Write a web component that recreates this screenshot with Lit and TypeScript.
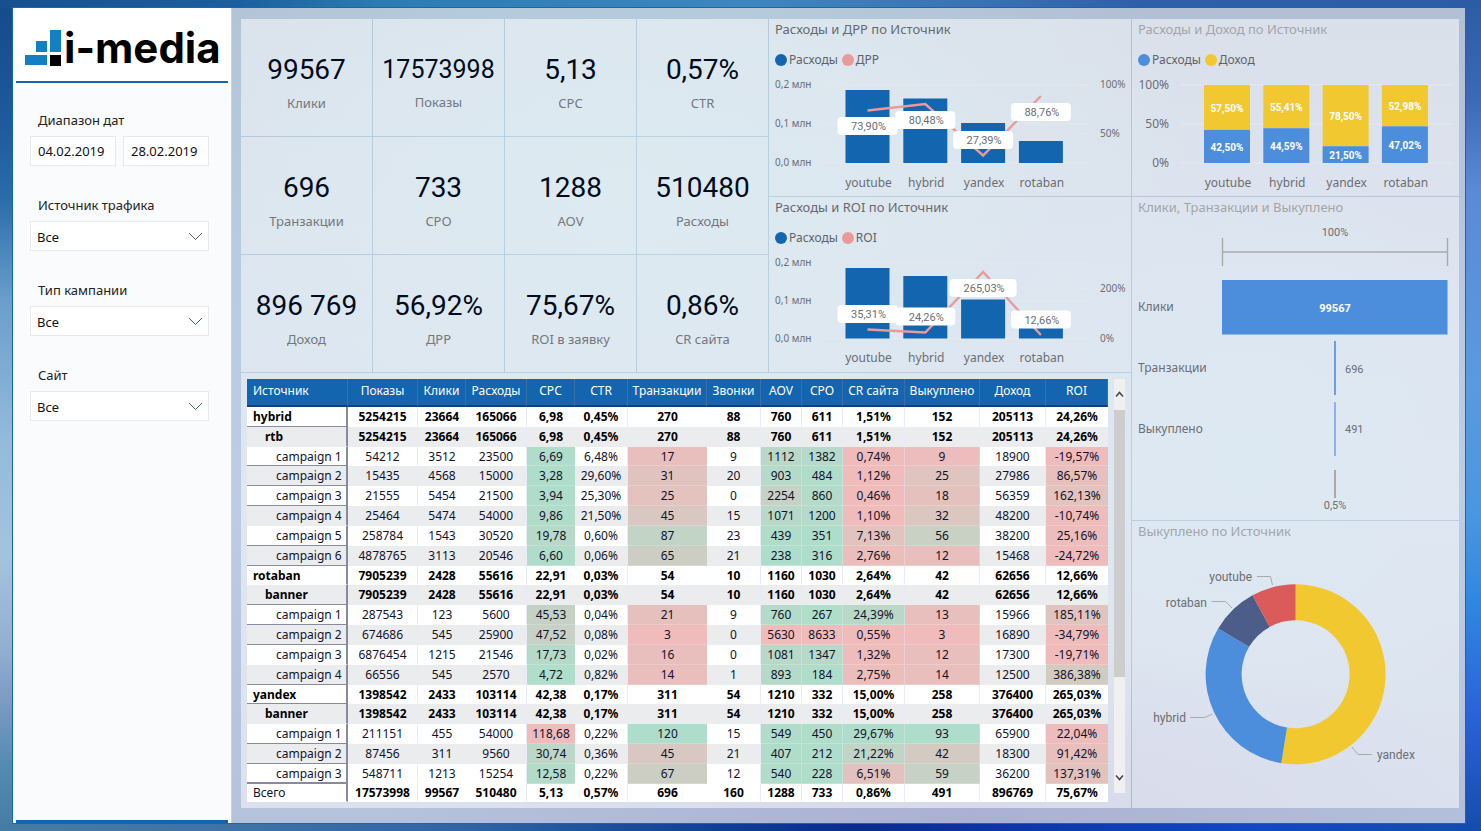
import { LitElement, html, css, svg, nothing } from "lit";
import { customElement, property } from "lit/decorators.js";
import { classMap } from "lit/directives/class-map.js";
import { styleMap } from "lit/directives/style-map.js";

const BLUE = "#1465b0";
const PINK = "#e99a9a";
const SKY = "#4d8edc";
const YELLOW = "#f2c831";

const chartText = css`
  :host {
    display: block;
  }
  svg {
    display: block;
    width: 100%;
    height: auto;
    overflow: visible;
  }
  text {
    font-family: "Noto Sans", "Open Sans", sans-serif;
    font-size: 12px;
    fill: #6b6e73;
    dominant-baseline: central;
  }
  .tiny {
    font-size: 10px;
  }
  .num {
    font-family: Roboto, sans-serif;
    font-size: 11px;
  }
  .mid {
    text-anchor: middle;
  }
  .end {
    text-anchor: end;
  }
  .inv {
    fill: #fff;
    font-weight: 700;
  }
  .small {
    font-size: 10px;
  }
  .grid {
    stroke: #e6e8ec;
    stroke-width: 1;
  }
`;

/* ---------- KPI tile ---------- */

@customElement("kpi-tile")
class KpiTile extends LitElement {
  @property() value = "";
  @property() label = "";

  static styles = css`
    :host {
      display: flex;
      flex-direction: column;
      align-items: center;
      justify-content: center;
      height: 117px;
      background: rgba(255, 255, 255, 0.52);
    }
    .value {
      font: 400 28px/36px Roboto, sans-serif;
      color: #030c1c;
      margin-top: 8px;
      white-space: nowrap;
    }
    .long {
      font-size: 25px;
      line-height: 34px;
    }
    .label {
      font-size: 13px;
      line-height: 18px;
      margin-top: 6px;
      color: #74777c;
    }
  `;

  render() {
    return html`
      <div class=${classMap({ value: true, long: this.value.length > 7 })}>${this.value}</div>
      <div class="label">${this.label}</div>
    `;
  }
}

/* ---------- Panel with title and legend ---------- */

@customElement("chart-card")
class ChartCard extends LitElement {
  @property() heading = "";
  @property({ attribute: false }) legend: { name: string; color: string }[] = [];
  @property({ type: Boolean }) muted = false;

  static styles = css`
    :host {
      display: block;
      background: rgba(255, 255, 255, 0.52);
    }
    .title {
      margin: 0;
      padding: 0 0 2px 6px;
      font-size: 13px;
      font-weight: 400;
      line-height: 20px;
      color: #666a70;
    }
    .muted {
      color: #a3a5a9;
    }
    .legend {
      display: flex;
      gap: 4px;
      margin: 0;
      padding: 11px 6px 0;
      list-style: none;
      font-size: 12px;
      line-height: 16px;
      color: #5f6368;
    }
    .entry {
      display: flex;
      align-items: center;
      gap: 2px;
    }
    .dot {
      width: 12px;
      height: 12px;
      border-radius: 50%;
    }
  `;

  render() {
    return html`
      <h2 class=${classMap({ title: true, muted: this.muted })}>${this.heading}</h2>
      ${this.legend.length
        ? html`<ul class="legend">
            ${this.legend.map(
              (l) => html`<li class="entry">
                <span class="dot" style=${styleMap({ background: l.color })}></span>${l.name}
              </li>`
            )}
          </ul>`
        : nothing}
      <slot></slot>
    `;
  }
}

/* ---------- Bars with a line on a second axis ---------- */

interface ComboPoint {
  name: string;
  top: number;
  y: number;
  tag: string;
  tagY: number;
}

@customElement("combo-chart")
class ComboChart extends LitElement {
  @property({ attribute: false }) points: ComboPoint[] = [];
  @property({ attribute: false }) left: [string, number][] = [];
  @property({ attribute: false }) right: [string, number][] = [];
  @property({ type: Number }) height = 128;

  static styles = chartText;

  render() {
    const base = this.left[this.left.length - 1]?.[1] ?? 0;
    const cx = (i: number) => 98.5 + i * 57.8;
    return html`<svg viewBox="0 0 362 ${this.height}">
      ${this.left.map(
        ([t, y]) => svg`
          <line class="grid" x1="53" x2="319" y1=${y} y2=${y}></line>
          <text class="tiny" x="6" y=${y - 1}>${t}</text>`
      )}
      ${this.right.map(
        ([t, y]) => svg`
          <line class="grid" x1="312" x2="319" y1=${y} y2=${y}></line>
          <text class="tiny" x="331" y=${y - 1}>${t}</text>`
      )}
      ${this.points.map(
        (p, i) => svg`
          <rect x=${cx(i) - 22} y=${p.top} width="44" height=${base - p.top} fill=${BLUE}></rect>
          <text class="mid" x=${cx(i) + 1} y=${base + 19}>${p.name}</text>`
      )}
      <polyline
        points=${this.points.map((p, i) => `${cx(i)},${p.y}`).join(" ")}
        fill="none"
        stroke=${PINK}
        stroke-width="2.4"
      ></polyline>
      ${this.points.map((p, i) => {
        const w = p.tag.length > 6 ? 67 : 60;
        return svg`
          <rect x=${cx(i) - w / 2} y=${p.tagY} width=${w} height="18" rx="4" fill="#fff"></rect>
          <text class="num mid" x=${cx(i) + 1} y=${p.tagY + 9.5}>${p.tag}</text>`;
      })}
    </svg>`;
  }
}

/* ---------- 100% stacked columns ---------- */

@customElement("stacked-chart")
class StackedChart extends LitElement {
  @property({ attribute: false }) rows: [string, number][] = [];

  static styles = chartText;

  render() {
    const pct = (n: number) => n.toFixed(2).replace(".", ",") + "%";
    return html`<svg viewBox="0 0 327 128">
      ${([["100%", 17], ["50%", 56], ["0%", 95]] as [string, number][]).map(
        ([t, y]) => svg`
          <line class="grid" x1="49" x2="321" y1=${y} y2=${y}></line>
          <text class="end" x="37" y=${y - 1}>${t}</text>`
      )}
      ${this.rows.map(([name, cost], i) => {
        const x = 72 + i * 59.3;
        const split = 95 - (78 * cost) / 100;
        return svg`
          <rect x=${x} y="17" width="46" height=${split - 17} fill=${YELLOW}></rect>
          <rect x=${x} y=${split} width="46" height=${95 - split} fill=${SKY}></rect>
          <text class="num small inv mid" x=${x + 23} y=${(17 + split) / 2 + 1}>${pct(100 - cost)}</text>
          <text class="num small inv mid" x=${x + 23} y=${(95 + split) / 2 + 1}>${pct(cost)}</text>
          <text class="mid" x=${x + 24} y="114">${name}</text>`;
      })}
    </svg>`;
  }
}

/* ---------- Funnel ---------- */

@customElement("funnel-chart")
class FunnelChart extends LitElement {
  static styles = chartText;

  render() {
    return html`<svg viewBox="0 0 327 301">
      <text class="num mid" x="203" y="13.5">100%</text>
      <path d="M90.5 19V47M315.5 19V47M90.5 33H315.5" fill="none" stroke="#a8aaad" stroke-width="1.4"></path>
      <rect x="90" y="61" width="225.5" height="54.5" fill=${SKY}></rect>
      <text class="num inv mid" x="203" y="89.5">99567</text>
      <text x="6" y="87">Клики</text>
      <text x="6" y="148">Транзакции</text>
      <text x="6" y="209">Выкуплено</text>
      <rect x="202" y="122" width="2" height="54" fill="#6a9fe1"></rect>
      <rect x="202" y="183" width="2" height="54" fill="#8db3e7"></rect>
      <rect x="202" y="251" width="2" height="28" fill="#a8aaad"></rect>
      <text class="num" x="213" y="150.5">696</text>
      <text class="num" x="213" y="210.5">491</text>
      <text class="num mid" x="203" y="286.5">0,5%</text>
    </svg>`;
  }
}

/* ---------- Donut ---------- */

@customElement("donut-chart")
class DonutChart extends LitElement {
  @property({ attribute: false }) slices: [number, string][] = [];

  static styles = [
    chartText,
    css`
      .leader {
        fill: none;
        stroke: #a8aaad;
      }
      .name {
        font-family: Roboto, sans-serif;
      }
    `,
  ];

  private arc(from: number, to: number) {
    const [cx, cy, R, r] = [163.6, 131.3, 90, 54];
    const at = (rad: number, t: number) => {
      const a = t * 2 * Math.PI;
      return `${(cx + rad * Math.sin(a)).toFixed(2)} ${(cy - rad * Math.cos(a)).toFixed(2)}`;
    };
    const big = to - from > 0.5 ? 1 : 0;
    return `M${at(R, from)}A${R} ${R} 0 ${big} 1 ${at(R, to)}L${at(r, to)}A${r} ${r} 0 ${big} 0 ${at(r, from)}Z`;
  }

  render() {
    const total = this.slices.reduce((s, [n]) => s + n, 0);
    let acc = 0;
    return html`<svg viewBox="0 0 327 265">
      ${this.slices.map(([n, color]) => {
        const from = acc / total;
        acc += n;
        return svg`<path d=${this.arc(from, acc / total)} fill=${color}></path>`;
      })}
      <polyline class="leader" points="125,33.5 138.5,33.5 140.5,42"></polyline>
      <polyline class="leader" points="79.5,58.5 93.5,58.5 100,65"></polyline>
      <polyline class="leader" points="58,174.5 72.5,174.5 80.5,171"></polyline>
      <polyline class="leader" points="220,204 226,211.5 240,211.5"></polyline>
      <text class="name end" x="120" y="34">youtube</text>
      <text class="name end" x="75" y="60">rotaban</text>
      <text class="name end" x="54" y="175">hybrid</text>
      <text class="name" x="245" y="212">yandex</text>
    </svg>`;
  }
}

/* ---------- Table ---------- */

const HEAD = ["Источник", "Показы", "Клики", "Расходы", "CPC", "CTR", "Транзакции", "Звонки", "AOV", "CPO", "CR сайта", "Выкуплено", "Доход", "ROI"];
const WIDTHS = [101, 70, 48, 61, 48, 53, 79, 54, 41, 41, 62, 75, 66, 62];

const ROWS: [number, string][] = [
  [0, "hybrid|5254215|23664|165066|6,98|0,45%|270|88|760|611|1,51%|152|205113|24,26%"],
  [1, "rtb|5254215|23664|165066|6,98|0,45%|270|88|760|611|1,51%|152|205113|24,26%"],
  [2, "campaign 1|54212|3512|23500|6,69|6,48%|17|9|1112|1382|0,74%|9|18900|-19,57%"],
  [2, "campaign 2|15435|4568|15000|3,28|29,60%|31|20|903|484|1,12%|25|27986|86,57%"],
  [2, "campaign 3|21555|5454|21500|3,94|25,30%|25|0|2254|860|0,46%|18|56359|162,13%"],
  [2, "campaign 4|25464|5474|54000|9,86|21,50%|45|15|1071|1200|1,10%|32|48200|-10,74%"],
  [2, "campaign 5|258784|1543|30520|19,78|0,60%|87|23|439|351|7,13%|56|38200|25,16%"],
  [2, "campaign 6|4878765|3113|20546|6,60|0,06%|65|21|238|316|2,76%|12|15468|-24,72%"],
  [0, "rotaban|7905239|2428|55616|22,91|0,03%|54|10|1160|1030|2,64%|42|62656|12,66%"],
  [1, "banner|7905239|2428|55616|22,91|0,03%|54|10|1160|1030|2,64%|42|62656|12,66%"],
  [2, "campaign 1|287543|123|5600|45,53|0,04%|21|9|760|267|24,39%|13|15966|185,11%"],
  [2, "campaign 2|674686|545|25900|47,52|0,08%|3|0|5630|8633|0,55%|3|16890|-34,79%"],
  [2, "campaign 3|6876454|1215|21546|17,73|0,02%|16|0|1081|1347|1,32%|12|17300|-19,71%"],
  [2, "campaign 4|66556|545|2570|4,72|0,82%|14|1|893|184|2,75%|14|12500|386,38%"],
  [0, "yandex|1398542|2433|103114|42,38|0,17%|311|54|1210|332|15,00%|258|376400|265,03%"],
  [1, "banner|1398542|2433|103114|42,38|0,17%|311|54|1210|332|15,00%|258|376400|265,03%"],
  [2, "campaign 1|211151|455|54000|118,68|0,22%|120|15|549|450|29,67%|93|65900|22,04%"],
  [2, "campaign 2|87456|311|9560|30,74|0,36%|45|21|407|212|21,22%|42|18300|91,42%"],
  [2, "campaign 3|548711|1213|15254|12,58|0,22%|67|12|540|228|6,51%|59|36200|137,31%"],
];
const TOTAL = "Всего|17573998|99567|510480|5,13|0,57%|696|160|1288|733|0,86%|491|896769|75,67%".split("|");
const UNRULED = new Set([1, 5, 8, 12, 15]);
const RULED_COLUMNS = new Set([1, 3, 5, 7, 8, 9, 10, 11, 12]);

/* column -> value shown green, value shown red */
const SCALE: Record<number, [number, number]> = {
  4: [3.28, 118.68],
  6: [120, 3],
  8: [238, 5630],
  9: [184, 8633],
  10: [29.67, 0.46],
  11: [93, 3],
  13: [870, -34.79],
};

function heat(col: number, text: string): string {
  const [good, bad] = SCALE[col];
  const v = parseFloat(text.replace(",", "."));
  const t = Math.min(1, Math.max(0, (v - good) / (bad - good)));
  const mix = (a: number, b: number) => Math.round(a + (b - a) * t);
  return `rgb(${mix(174, 240)}, ${mix(222, 187)}, ${mix(203, 187)})`;
}

@customElement("source-table")
class SourceTable extends LitElement {
  static styles = css`
    :host {
      display: flex;
      gap: 6px;
      padding: 6px;
      background: rgba(255, 255, 255, 0.52);
    }
    .data {
      flex: 1;
      height: 423px;
      table-layout: fixed;
      border-collapse: separate;
      border-spacing: 0;
      background: #fff;
      font-size: 12px;
      line-height: 16px;
      color: #12122a;
    }
    th,
    td {
      padding: 1px 0 0;
      text-align: center;
      white-space: nowrap;
      font-weight: 400;
      border-bottom: 1px solid transparent;
    }
    .head {
      height: 28px;
      box-sizing: border-box;
      padding-bottom: 4px;
      background: #1465b0;
      color: #fff;
      border-right: 1px solid #3a6fa8;
      border-bottom: 2px solid #123f78;
    }
    .first {
      padding-left: 6px;
      text-align: left;
    }
    .rule {
      border-right: 1px solid #e8ebf5;
    }
    .hot {
      border-right-color: rgba(232, 235, 245, 0.4);
      border-bottom-color: rgba(255, 255, 255, 0.2);
    }
    .even {
      background: #ebecee;
    }
    .bold {
      font-weight: 700;
      color: #000;
    }
    .name {
      text-align: left;
      border-right: 2px solid #878ba0;
    }
    .lined {
      border-bottom: 1px solid #878ba0;
    }
    .l0 {
      padding-left: 6px;
    }
    .l1 {
      padding-left: 18px;
    }
    .l2 {
      padding-left: 29px;
    }
    .last {
      box-shadow: inset 0 -1px #878ba0;
    }
    .scroll {
      width: 11px;
      display: flex;
      flex-direction: column;
      background: #f0f0f0;
      margin-bottom: 9px;
    }
    .step {
      display: grid;
      place-items: center;
      height: 31px;
      padding: 0;
      border: 0;
      background: none;
    }
    .thumb {
      height: 267px;
      background: #cdcdcd;
      margin-bottom: auto;
    }
  `;

  private cell(text: string, c: number, bold: boolean) {
    const hot = !bold && c in SCALE;
    return html`<td
      class=${classMap({ bold, hot, rule: RULED_COLUMNS.has(c) })}
      style=${hot ? `background-color:${heat(c, text)}` : nothing}
    >${text}</td>`;
  }

  render() {
    return html`
      <table class="data">
        <colgroup>
          ${WIDTHS.map((w) => html`<col style="width:${w}px" />`)}
        </colgroup>
        <thead>
          <tr>
            ${HEAD.map((h, i) => html`<th scope="col" class=${classMap({ head: true, first: i === 0 })}>${h}</th>`)}
          </tr>
        </thead>
        <tbody>
          ${ROWS.map(([level, line], r) => {
            const [name, ...cells] = line.split("|");
            const bold = level < 2;
            return html`<tr class=${classMap({ even: r % 2 === 1 })}>
              <th
                scope="row"
                class=${classMap({
                  name: true,
                  bold,
                  ["l" + level]: true,
                  lined: !UNRULED.has(r),
                  last: r === ROWS.length - 1,
                })}
              >${name}</th>
              ${cells.map((t, i) => this.cell(t, i + 1, bold))}
            </tr>`;
          })}
        </tbody>
        <tfoot>
          <tr>
            <th scope="row" class="name l0">${TOTAL[0]}</th>
            ${TOTAL.slice(1).map((t, i) => this.cell(t, i + 1, true))}
          </tr>
        </tfoot>
      </table>
      <div class="scroll">
        <button class="step" aria-label="Вверх">
          <svg width="9" height="7" viewBox="0 0 9 7"><path d="M1 5.5 4.5 1.5 8 5.5" fill="none" stroke="#444" stroke-width="1.5" /></svg>
        </button>
        <div class="thumb"></div>
        <button class="step" aria-label="Вниз">
          <svg width="9" height="7" viewBox="0 0 9 7"><path d="M1 1.5 4.5 5.5 8 1.5" fill="none" stroke="#444" stroke-width="1.5" /></svg>
        </button>
      </div>
    `;
  }
}

/* ---------- Sidebar ---------- */

@customElement("filter-bar")
class FilterBar extends LitElement {
  static styles = css`
    :host {
      display: flex;
      flex-direction: column;
      background: #fafbfd;
      border-right: 1px solid #cdd0d4;
    }
    .top {
      background: #fff;
      margin-bottom: 27px;
    }
    .brand {
      display: flex;
      align-items: center;
      gap: 3px;
      height: 73px;
      padding: 6px 0 0 12px;
      box-sizing: border-box;
    }
    .line {
      height: 2px;
      margin: 0 3px;
      background: #1465b0;
      flex: none;
    }
    .word {
      font: 700 42px/48px Inter, sans-serif;
      color: #000;
    }
    .filters {
      display: flex;
      flex-direction: column;
      gap: 29px;
      padding: 0 22px 0 17px;
      flex: 1;
    }
    .field {
      display: grid;
      gap: 6px;
      margin: 0;
      padding: 0;
      border: 0;
    }
    .caption {
      padding-left: 8px;
      font-size: 13px;
      line-height: 20px;
      color: #222;
    }
    .dates {
      display: grid;
      grid-template-columns: 1fr 1fr;
      gap: 7px;
    }
    .box {
      box-sizing: border-box;
      width: 100%;
      height: 30px;
      margin: 0;
      padding: 0 0 0 7px;
      border: 1px solid #e9e9ea;
      border-radius: 0;
      background: #fff;
      font: 13px/20px "Noto Sans", sans-serif;
      color: #111;
      appearance: none;
    }
    .drop {
      padding: 2px 24px 0 6px;
      grid-area: 1 / 1;
    }
    .pick {
      display: grid;
      align-items: center;
    }
    .arrow {
      grid-area: 1 / 1;
      justify-self: end;
      margin-right: 6px;
      pointer-events: none;
    }
    .foot {
      height: 3px;
    }
  `;

  private select(id: string, caption: string) {
    return html`<div class="field">
      <label class="caption" for=${id}>${caption}</label>
      <div class="pick">
        <select class="box drop" id=${id}>
          <option>Все</option>
        </select>
        <svg class="arrow" width="15" height="9" viewBox="0 0 15 9">
          <path d="M1 1 7.5 7.5 14 1" fill="none" stroke="#3f6172" />
        </svg>
      </div>
    </div>`;
  }

  render() {
    return html`
      <div class="top">
        <div class="brand">
          <svg width="36" height="36" viewBox="0 0 36 36">
            <path d="M0 25H22V35H0ZM11 11H22V22H11ZM25 0H36V22H25Z" fill="#1480c4" />
            <path d="M25 25H36V36H25Z" fill="#000" />
          </svg>
          <span class="word">i-media</span>
        </div>
        <div class="line"></div>
      </div>
      <div class="filters">
        <fieldset class="field">
          <label class="caption" for="from">Диапазон дат</label>
          <div class="dates">
            <input class="box" id="from" value="04.02.2019" />
            <input class="box" id="to" aria-label="Диапазон дат" value="28.02.2019" />
          </div>
        </fieldset>
        ${this.select("src", "Источник трафика")} ${this.select("type", "Тип кампании")}
        ${this.select("site", "Сайт")}
      </div>
      <div class="line foot"></div>
    `;
  }
}

/* ---------- Page ---------- */

const KPIS = [
  ["99567", "Клики"],
  ["17573998", "Показы"],
  ["5,13", "CPC"],
  ["0,57%", "CTR"],
  ["696", "Транзакции"],
  ["733", "CPO"],
  ["1288", "AOV"],
  ["510480", "Расходы"],
  ["896 769", "Доход"],
  ["56,92%", "ДРР"],
  ["75,67%", "ROI в заявку"],
  ["0,86%", "CR сайта"],
];

const DRR: ComboPoint[] = [
  { name: "youtube", top: 22, y: 42.5, tag: "73,90%", tagY: 49 },
  { name: "hybrid", top: 30.5, y: 36, tag: "80,48%", tagY: 43 },
  { name: "yandex", top: 55, y: 87.5, tag: "27,39%", tagY: 63 },
  { name: "rotaban", top: 73, y: 28, tag: "88,76%", tagY: 35 },
];

const ROI: ComboPoint[] = [
  { name: "youtube", top: 22, y: 83.5, tag: "35,31%", tagY: 59 },
  { name: "hybrid", top: 30, y: 86.5, tag: "24,26%", tagY: 61.5 },
  { name: "yandex", top: 53.5, y: 26, tag: "265,03%", tagY: 33 },
  { name: "rotaban", top: 72, y: 89, tag: "12,66%", tagY: 64.5 },
];

@customElement("app-root")
class AppRoot extends LitElement {
  static styles = css`
    :host {
      display: flex;
      box-sizing: border-box;
      min-height: 100vh;
      padding: 8px 16px 8px 13px;
      font-family: "Noto Sans", "Open Sans", sans-serif;
      background:
        linear-gradient(90deg, #17508f, #1c5f9e 16%, #2b7db0 26%, #3f86bd 51%, #3a72b4 66%, #2f5fa9 77%, #2c5ca5) top / 100% 8px no-repeat,
        linear-gradient(90deg, #467ba5, #3f72a6 16%, #2f63a4 32%, #103f96 48%, #0a2a8e 58%, #0d35a8 68%, #1048c6 85%, #154dac) bottom / 100% 8px no-repeat,
        linear-gradient(#164a8a, #1d5a9e 15%, #2b6cab 24%, #6a9ecb 36%, #94badb 53%, #a4c3de 67%, #93afd0 78%, #7d9cc4 84%, #558bb0 92%, #467ba5) left / 13px 100% no-repeat,
        linear-gradient(#2c5ca5, #3a6ab8 12%, #5a8ad8 23%, #5a9ae0 46%, #4a96e0 62%, #2f86e0 73%, #2a62da 86%, #154dac) right / 16px 100% no-repeat,
        #2c5ca5;
    }
    .frame {
      flex: 1;
      display: grid;
      grid-template-columns: 219px 1fr;
      outline: 1px solid #1667b3;
      background:
        radial-gradient(ellipse 40% 50% at 42% 22%, rgba(184, 215, 226, 0.9), rgba(184, 215, 226, 0)),
        radial-gradient(ellipse 40% 22% at 66% 100%, rgba(171, 176, 210, 1), rgba(171, 176, 210, 0)),
        radial-gradient(ellipse 20% 35% at 85% 55%, rgba(184, 210, 228, 0.9), rgba(184, 210, 228, 0)),
        linear-gradient(#b2bfd4, #b8c6de 30%, #bccce2 60%, #b4c2dc);
    }
    .board {
      display: grid;
      grid-template-columns: 890fr 327fr;
      gap: 1px;
      padding: 11px 6px 15px 9px;
    }
    .left,
    .right,
    .charts {
      display: flex;
      flex-direction: column;
      gap: 1px;
    }
    .upper {
      display: grid;
      grid-template-columns: 527fr 362fr;
      gap: 1px;
    }
    .kpis {
      display: grid;
      grid-template-columns: repeat(4, 1fr);
      gap: 1px;
    }
    .grow {
      flex: 1;
    }
  `;

  render() {
    return html`
      <div class="frame">
        <filter-bar></filter-bar>
        <main class="board">
          <div class="left">
            <div class="upper">
              <div class="kpis">
                ${KPIS.map(([v, l]) => html`<kpi-tile .value=${v} .label=${l}></kpi-tile>`)}
              </div>
              <div class="charts">
                <chart-card
                  heading="Расходы и ДРР по Источник"
                  .legend=${[{ name: "Расходы", color: BLUE }, { name: "ДРР", color: PINK }]}
                >
                  <combo-chart
                    .points=${DRR}
                    .left=${[["0,2 млн", 17], ["0,1 млн", 56], ["0,0 млн", 95]]}
                    .right=${[["100%", 17], ["50%", 65.5]]}
                  ></combo-chart>
                </chart-card>
                <chart-card
                  class="grow"
                  heading="Расходы и ROI по Источник"
                  .legend=${[{ name: "Расходы", color: BLUE }, { name: "ROI", color: PINK }]}
                >
                  <combo-chart
                    .height=${126}
                    .points=${ROI}
                    .left=${[["0,2 млн", 17], ["0,1 млн", 55], ["0,0 млн", 92.5]]}
                    .right=${[["200%", 42.5], ["0%", 92.5]]}
                  ></combo-chart>
                </chart-card>
              </div>
            </div>
            <source-table class="grow"></source-table>
          </div>
          <div class="right">
            <chart-card
              muted
              heading="Расходы и Доход по Источник"
              .legend=${[{ name: "Расходы", color: SKY }, { name: "Доход", color: YELLOW }]}
            >
              <stacked-chart
                .rows=${[["youtube", 42.5], ["hybrid", 44.59], ["yandex", 21.5], ["rotaban", 47.02]]}
              ></stacked-chart>
            </chart-card>
            <chart-card muted heading="Клики, Транзакции и Выкуплено">
              <funnel-chart></funnel-chart>
            </chart-card>
            <chart-card class="grow" muted heading="Выкуплено по Источник">
              <donut-chart
                .slices=${[[258, YELLOW], [152, SKY], [42, "#4d5d89"], [39, "#db5a5a"]]}
              ></donut-chart>
            </chart-card>
          </div>
        </main>
      </div>
    `;
  }
}
